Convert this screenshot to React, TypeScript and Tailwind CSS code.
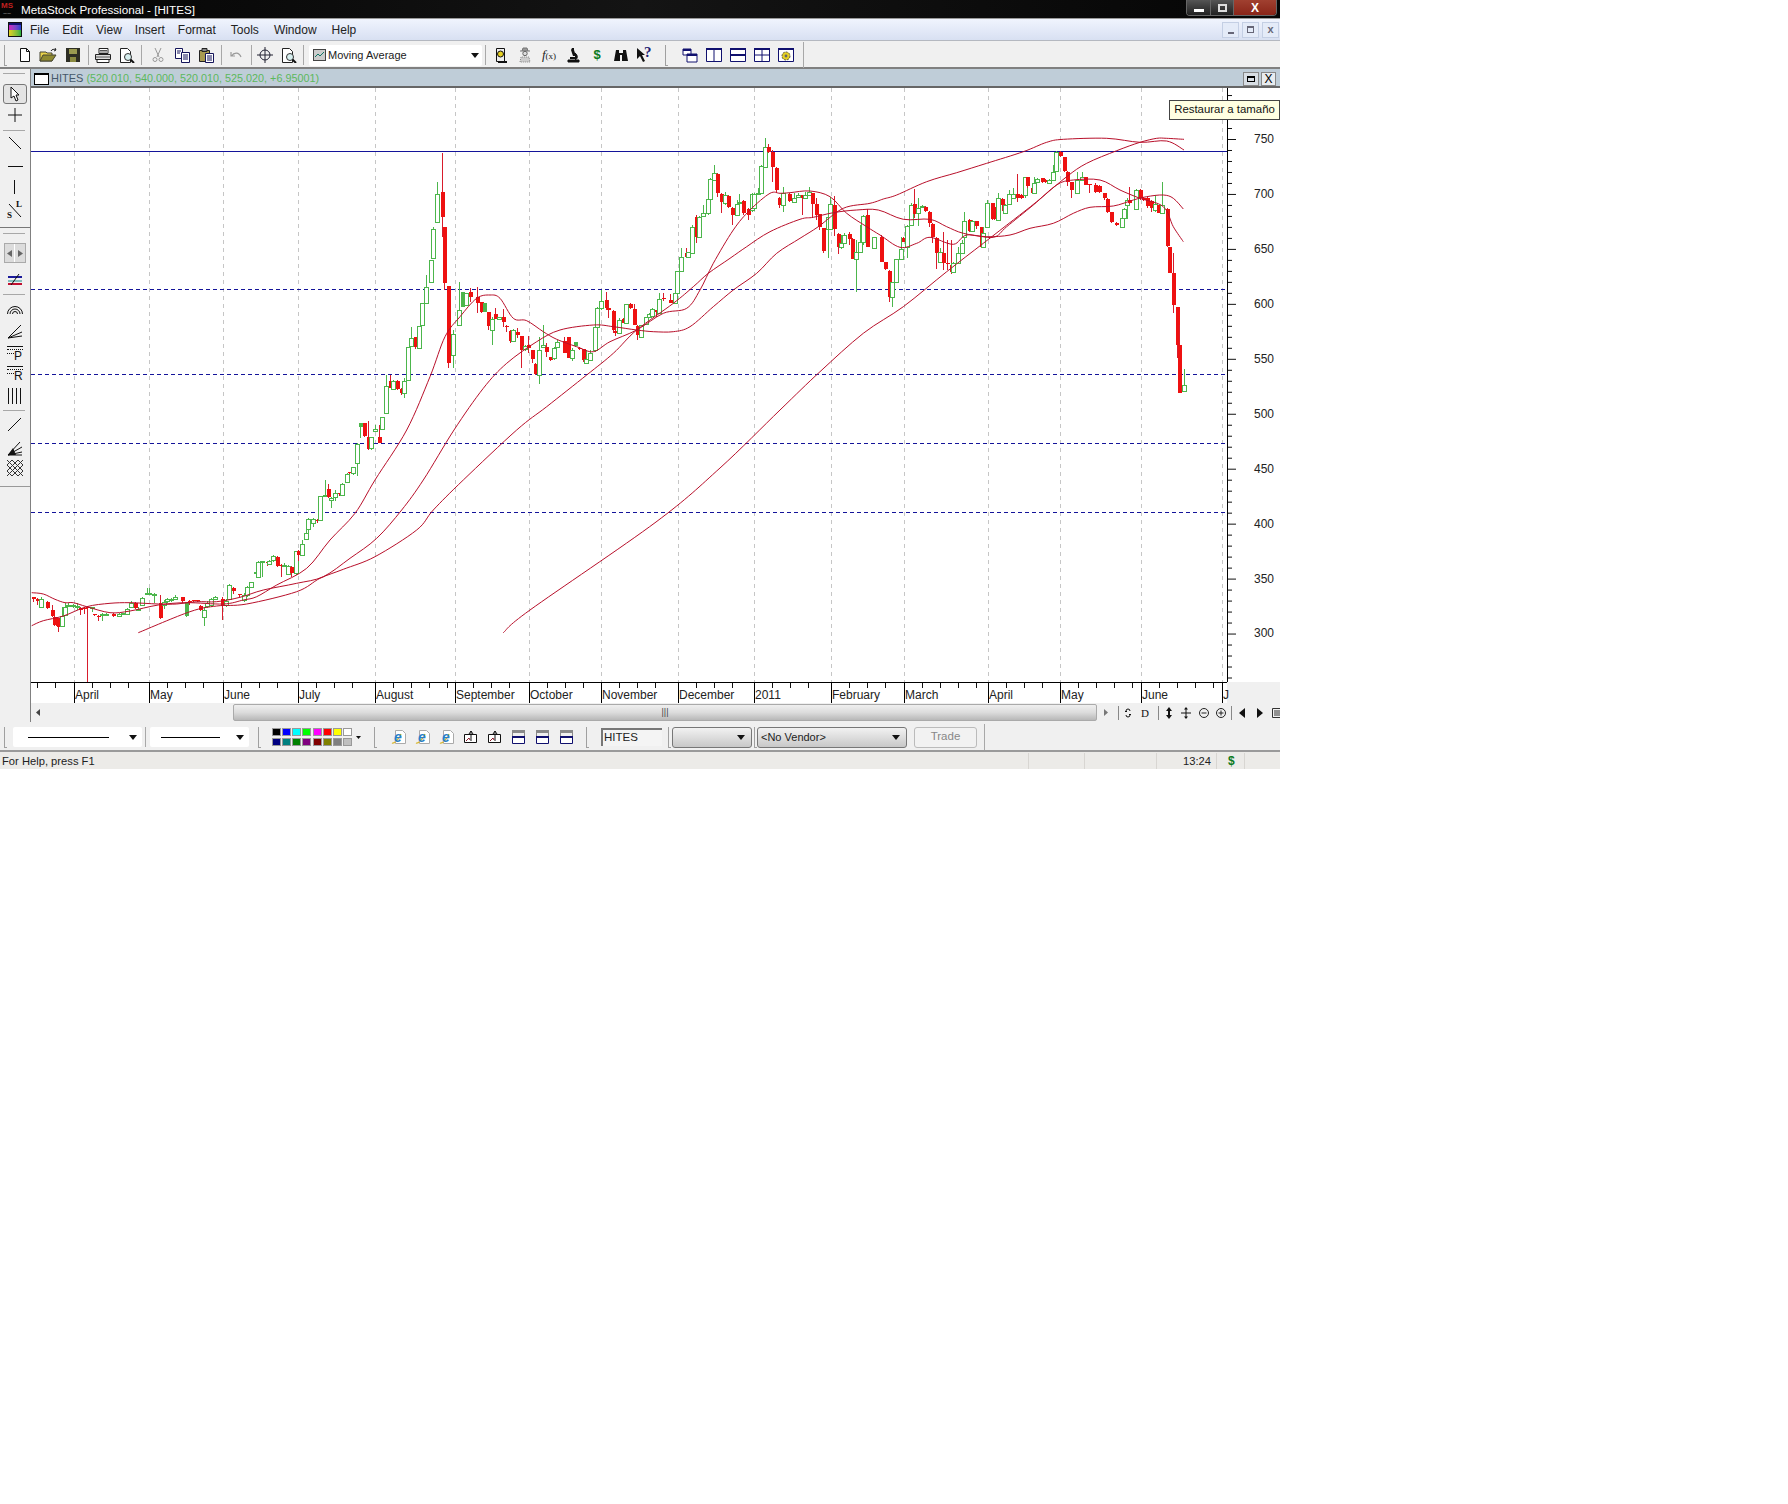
import React from 'react';

type Pt = [number, number];

const parseCandles = (ox: number, oy: number, s: string) =>
  s.split(',').map((row) => {
    const r = row.trim();
    const [x, h, l, t, b] = r.slice(1).split(' ').map(Number);
    return { c: r[0], x: Math.round(ox + x / 3), h: oy + h / 3, l: oy + l / 3, t: Math.round(oy + t / 3), b: Math.round(oy + b / 3) };
  });

const shift = (ox: number, oy: number, pts: Pt[]): Pt[] => pts.map(([x, y]) => [ox + x / 3, oy + y / 3]);

// catmull-rom through the points read off the chart
const smooth = (p: Pt[]) => {
  let d = `M${p[0][0].toFixed(1)} ${p[0][1].toFixed(1)}`;
  for (let i = 0; i < p.length - 1; i++) {
    const a = p[i - 1] || p[i];
    const b = p[i];
    const c = p[i + 1];
    const e = p[i + 2] || c;
    d += `C${(b[0] + (c[0] - a[0]) / 6).toFixed(1)} ${(b[1] + (c[1] - a[1]) / 6).toFixed(1)} ${(c[0] - (e[0] - b[0]) / 6).toFixed(1)} ${(c[1] - (e[1] - b[1]) / 6).toFixed(1)} ${c[0].toFixed(1)} ${c[1].toFixed(1)}`;
  }
  return d;
};

const candles = [
  ...parseCandles(30, 480, 'r10 350 365 352 358,r20 355 375 358 362,g32 352 382 358 380,r52 362 388 365 385,r65 375 410 390 408,r72 408 438 410 435,r80 410 440 415 438,r85 415 455 418 440,g97 380 438 408 437,g105 370 408 382 406,g115 368 382 374 378,g128 372 385 376 378,g140 368 390 378 380,r150 380 405 384 390,r163 382 402 385 387,r172 378 605 380 383,g187 380 396 381 383,r192 402 408 403 406,r205 405 422 407 409,g217 398 422 402 404,g228 400 404 401 403,r250 398 410 402 409,g268 398 410 402 408,g280 398 405 400 402,g290 385 405 386 402,g303 362 382 370 380,r316 365 388 368 385,g325 382 392 386 390,g337 350 378 355 376,g350 325 345 340 342,g358 325 342 340 342,g372 340 370 342 344,r390 345 418 370 415,g402 360 388 365 375,g410 355 370 358 362,g422 355 365 358 360,g435 345 360 350 358,r455 350 370 352 364,G468 365 410 367 408,r478 360 375 362 364,r490 360 365 361 363,r500 360 365 361 363,r510 375 392 377 390,g523 380 437 390 410,g532 362 385 368 378,g542 355 380 358 375,g555 348 360 352 356,r575 350 420 357 378,g587 358 380 362 376,g597 312 360 314 358,r608 322 342 325 332,r627 342 352 343 345,g642 340 365 345 360,g651 318 350 320 345,g663 305 325 307 322,g677 270 295 277 280,g683 242 295 245 292,g695 242 290 244 246,r710 245 258 246 248,g717 240 255 243 251,g729 225 245 227 241,r742 228 262 230 258,r752 252 290 254 256,g762 250 262 254 259,g775 255 285 258 282,r783 258 292 260 280,g797 212 285 214 280,r805 210 242 212 225,g816 180 228 193 226,g829 148 180 160 178,g834 115 175 118 148,g848 115 142 117 128,r860 118 128 119 120,g870 48 122 48 120,g884 0 50 45 48,r895 12 55 28 52,g904 50 85 54 60,g915 30 62 38 52,r927 38 48 40 42,g936 10 48 12 46'),
  ...parseCandles(335, 340, 'g35 400 425 402 425,r43 395 402 396 399,g54 380 405 382 400,g67 310 408 312 368,G75 250 295 250 260,r86 250 290 250 288,r100 243 330 290 328,g108 290 330 292 325,g120 255 275 267 274,r132 255 310 292 308'),
  ...parseCandles(380, 130, 'g5 860 900 860 898,g17 735 850 768 848,r30 735 775 752 774,g38 750 780 752 778,r50 750 780 752 778,r62 775 795 778 788,g72 745 805 752 790,g85 650 752 652 750,g93 590 650 625 648,r105 622 658 622 650,g118 588 655 588 654,g127 520 585 520 585,g138 435 520 470 518,g152 390 455 390 455,g158 290 385 298 385,g171 155 275 192 275,r185 70 320 186 262,r191 290 480 290 458,r204 468 715 468 698,g218 600 715 612 675,g238 455 585 540 585,G245 485 532 486 532,g258 488 528 488 526,r271 475 515 486 502,r290 470 548 502 520,r304 515 550 516 545,G312 520 545 520 545,r324 545 600 545 588,g337 560 645 568 600,r346 535 568 553 566,g357 560 570 562 568,r370 538 590 562 576,r378 585 605 587 590,r390 600 640 602 632,g399 598 635 600 632,r411 595 625 606 614,r424 618 715 618 660,g435 645 662 647 658,r445 618 670 645 655,r457 660 700 660 686,r465 700 735 702 732,g477 620 763 660 735,g490 585 650 645 650,r498 640 680 652 665,r510 680 692 682 691,g523 650 690 655 685,g530 630 655 635 652,r552 622 670 634 668,r564 622 685 622 684,g577 655 692 660 685,G585 635 650 635 648,r597 652 660 654 658,r610 656 695 658 690,g618 660 700 686 700,g630 660 690 668 690,g645 590 665 592 660,g652 530 595 535 590,g663 480 540 512 535,r677 487 540 510 535,r685 510 565 535 540,r698 540 610 542 600,r706 600 618 602 608,g716 565 612 570 610,r730 565 580 568 578,g738 522 580 522 580,r750 520 538 522 535,r763 522 585 538 585,r772 585 630 588 615,g782 585 620 586 620,g797 560 585 562 582,g806 550 562 552 560,g816 535 560 538 558,r828 540 560 540 545,g838 490 550 508 548,r850 490 512 505 508,r870 492 520 510 518,g884 480 520 490 518,g890 422 490 424 490,g903 355 425 382 424,r917 355 382 368 382,g923 365 385 367 382,g936 285 368 290 368,r948 255 340 260 322,g956 258 322 260 322,g968 225 258 250 258,g983 200 255 208 250,g990 145 208 148 208,g1003 105 150 130 150,r1011 130 200 132 190,r1023 190 250 192 215,g1035 185 225 195 220,r1044 195 235 197 232,r1056 232 285 234 254,g1070 210 258 222 256,g1078 192 222 215 218,r1089 210 255 212 248,r1103 235 270 238 255,g1115 190 245 193 240,g1122 190 235 193 235,g1135 175 195 190 193,g1143 105 190 108 190,g1156 25 110 52 110,r1165 42 70 52 65,r1176 60 155 65 112,r1189 112 190 115 180,r1196 200 235 203 225'),
  ...parseCandles(780, 130, 'g10 170 245 190 225,r28 190 215 192 213,g42 190 215 205 215,g55 190 205 195 200,r65 195 255 196 203,g75 185 207 195 205,g88 172 197 187 195,r96 190 265 190 222,r108 205 270 222 255,r117 252 300 253 292,r130 295 368 295 362,g143 258 385 260 298,g150 200 300 222 298,r162 198 318 225 298,r175 310 372 312 352,g183 315 358 340 352,g193 310 340 315 338,r207 305 345 312 328,r216 325 388 328 386,g228 330 485 365 388,g240 285 368 335 365,g248 255 345 258 335,r262 238 352 255 352,g282 320 355 322 355,r302 315 395 320 395,r315 395 420 397 418,r328 420 515 422 500,g335 455 532 455 500,g348 388 455 388 455,g362 320 388 358 388,r370 320 335 325 335,g381 285 385 288 352,g393 220 288 225 285,r403 178 265 222 252,g415 205 288 235 250,g425 225 235 228 232,r435 228 245 230 243,r448 243 290 245 280,r456 280 340 282 322,r468 322 418 325 368,g481 355 400 365 395,r489 305 420 368 398,r501 330 420 400 403,r513 330 432 405 425,g520 395 425 400 425,g533 350 400 368 398,g545 330 370 340 368,g552 245 338 272 320,r566 268 305 270 302,g577 270 305 272 302,r588 272 298 273 288,r604 290 355 290 350,g610 290 355 310 352,g621 210 290 218 290,r635 218 270 218 268,r642 230 270 232 268,g654 190 272 205 270,r665 205 242 208 225,g674 222 248 224 248,g687 180 222 192 222,g700 175 205 192 205,r710 132 215 192 205,r722 192 208 194 205,g735 142 205 142 195,r742 142 175 142 168,r755 172 188 174 188,g762 140 190 158 190,g772 145 158 146 156,r787 143 160 145 155,r795 148 160 150 155,g806 148 162 150 160,g820 105 150 125 150,g828 62 125 65 122,r840 62 80 65 78,r852 80 125 82 122,r860 122 168 125 155,r873 155 205 157 180,g892 125 190 150 188,g907 125 150 142 150,r914 140 165 142 165,r926 162 188 163 165,r945 160 188 165 185,r958 165 190 168 186,r972 188 210 190 205,r982 205 250 207 245,r993 245 280 247 275,r1008 275 288 278 286,g1025 262 292 265 290,g1033 235 270 238 265,g1040 205 268 210 225,r1048 172 222 210 218,g1067 178 240 180 238,r1080 178 210 180 205,r1090 200 212 203 210,r1101 202 235 204 228,r1113 210 245 212 235,g1125 195 245 222 240,r1134 225 250 225 248,g1146 155 250 225 250,r1160 235 350 238 348,r1166 350 430 350 428,r1180 370 550 430 525,r1192 530 685 530 645,r1198 585 790 645 788,g1213 718 785 765 782'),
];

const movingAverages: Pt[][] = [
  [
    ...shift(30, 480, [[5, 338], [40, 342], [75, 358], [105, 368], [130, 368], [170, 380], [240, 398], [300, 393], [385, 375], [470, 368], [580, 372], [640, 360], [680, 350], [740, 315], [830, 265], [900, 180], [975, 100], [1035, 0]]),
    ...shift(380, 130, [[80, 900], [150, 740], [195, 620], [240, 560], [290, 505], [330, 495], [360, 505], [400, 565], [440, 572], [490, 605], [530, 628], [590, 650], [640, 665], [690, 635], [770, 600], [850, 550], [920, 535], [960, 480], [1000, 400], [1060, 300], [1110, 240], [1170, 190]]),
    ...shift(780, 130, [[0, 190], [30, 188], [90, 183], [150, 200], [200, 250], [260, 290], [300, 315], [360, 352], [410, 340], [450, 322], [520, 343], [560, 315], [640, 322], [680, 290], [760, 225], [830, 165], [880, 150], [960, 150], [1020, 180], [1080, 205], [1150, 230], [1180, 290], [1210, 335]]),
  ],
  [
    ...shift(30, 480, [[5, 437], [40, 422], [100, 408], [170, 380], [240, 370], [300, 368], [385, 372], [440, 372], [500, 365], [560, 365], [630, 352], [700, 330], [800, 310], [880, 290], [960, 235], [1040, 175], [1115, 90], [1180, 0]]),
    ...shift(380, 130, [[222, 900], [310, 775], [380, 700], [470, 635], [540, 600], [640, 585], [700, 590], [770, 600], [820, 605], [880, 605], [930, 590], [1000, 530], [1060, 480], [1130, 430], [1190, 370]]),
    ...shift(780, 130, [[60, 325], [115, 290], [190, 235], [270, 220], [310, 207], [350, 195], [440, 155], [530, 128], [620, 100], [730, 65], [800, 37], [850, 28], [980, 25], [1080, 37], [1160, 33], [1212, 60]]),
  ],
  [
    ...shift(30, 480, [[325, 458], [480, 395], [560, 378], [650, 372], [800, 335], [870, 295], [940, 268], [1035, 230], [1160, 150], [1210, 90], [1300, 0]]),
    ...shift(380, 130, [[410, 900], [500, 830], [620, 735], [700, 670], [770, 600], [880, 520], [940, 470], [985, 430], [1050, 385], [1100, 350], [1170, 305]]),
    ...shift(780, 130, [[60, 268], [100, 262], [160, 248], [230, 240], [295, 240], [370, 268], [450, 268], [500, 290], [550, 310], [620, 320], [690, 315], [750, 295], [820, 280], [880, 250], [930, 232], [1000, 228], [1060, 210], [1100, 200], [1150, 195], [1180, 205], [1210, 237]]),
  ],
  [
    ...shift(30, 480, [[1420, 458], [1500, 390]]),
    [656, 522], [720, 468],
    ...shift(780, 130, [[0, 840], [120, 725], [250, 610], [370, 530], [500, 425], [610, 340], [700, 270], [770, 215], [860, 140], [920, 100], [1010, 62], [1080, 37], [1130, 25], [1160, 25], [1212, 28]]),
  ],
];

const gridX = [74, 149, 223, 298, 375, 455, 529, 601, 678, 754, 831, 904, 988, 1060, 1141, 1222];
const dashedY = [289, 374, 443, 512];
const prices = [750, 700, 650, 600, 550, 500, 450, 400, 350, 300];
const priceTicks = Array.from({ length: 54 }, (_, i) => i - 4);

const minorDates: number[] = [];
[31, ...gridX].forEach((x, i, all) => {
  const next = all[i + 1] ?? 1227;
  for (let t = i === 0 ? 37 : x + 18; t < next - 6; t += 18) minorDates.push(t);
});

const Chart = () => (
  <svg width="1196" height="594" viewBox="31 88 1196 594" className="block">
    {gridX.map((x) => (
      <line key={x} x1={x + 0.5} x2={x + 0.5} y1="88" y2="682" stroke="#c6c6c6" strokeDasharray="4 4" />
    ))}
    <line x1="31" x2="1227" y1="151.5" y2="151.5" stroke="#14149a" />
    {dashedY.map((y) => (
      <line key={y} x1="31" x2="1227" y1={y + 0.5} y2={y + 0.5} stroke="#14149a" strokeDasharray="4 3" />
    ))}
    <g shapeRendering="crispEdges">
      {candles.map((k, i) => {
        const color = k.c === 'r' ? '#ee1111' : '#4cb64c';
        return (
          <g key={i}>
            <line x1={k.x + 0.5} x2={k.x + 0.5} y1={k.h} y2={k.l} stroke={k.c === 'r' ? '#d81c2c' : color} />
            {k.c === 'g' ? (
              <rect x={k.x - 1.5} y={k.t + 0.5} width="4" height={Math.max(k.b - k.t, 1)} fill="#fff" stroke={color} />
            ) : (
              <rect x={k.x - 1} y={k.t} width="4" height={Math.max(k.b - k.t, 1)} fill={color} />
            )}
          </g>
        );
      })}
    </g>
    {movingAverages.map((p, i) => (
      <path key={i} d={smooth(p)} fill="none" stroke="#b80f2a" strokeWidth="1" />
    ))}
  </svg>
);

const Ico = ({ children, w = 16, h = 16 }: { children: React.ReactNode; w?: number; h?: number }) => (
  <svg width={w} height={h} viewBox={`0 0 ${w} ${h}`} className="block shrink-0">
    {children}
  </svg>
);

const Btn = ({ children }: { children: React.ReactNode }) => (
  <div className="w-[24px] h-full flex items-center justify-center shrink-0">{children}</div>
);

const Sep = ({ className = '' }: { className?: string }) => (
  <div className={`w-px h-[20px] bg-[#a8a8a8] shrink-0 ${className}`} />
);

const Handle = ({ className = '' }: { className?: string }) => (
  <div className={`w-[3px] h-[21px] border-l border-b border-[#a0a0a0] shrink-0 ${className}`} />
);

const DownArrow = () => (
  <Ico w={8} h={5}>
    <path d="M0 0h8L4 5z" fill="#111" />
  </Ico>
);

const DocIcon = () => (
  <Ico>
    <path d="M3.5 1.5h6l3 3v10h-9z" fill="#fff" stroke="#111" />
    <path d="M9.5 1.5v3h3" fill="none" stroke="#111" />
  </Ico>
);
const OpenIcon = () => (
  <Ico w={20}>
    <path d="M1 5h6l1 1h5v8H1z" fill="#e8d24a" stroke="#443" />
    <path d="M1 14l3-6h13l-4 6z" fill="#8f8a30" stroke="#443" />
    <path d="M12 4c1-2 3-2 5-1l-1-2m1 2l-2 1" fill="none" stroke="#222" />
  </Ico>
);
const SaveIcon = () => (
  <Ico>
    <path d="M1 1h14v14H1z" fill="#2e2e24" />
    <path d="M4 2h8v5H4z" fill="#9a9a50" />
    <path d="M5 10h6v5H5z" fill="#8a8a40" />
  </Ico>
);
const PrintIcon = () => (
  <Ico w={18}>
    <path d="M5 1.5h9v5H5z" fill="#fff" stroke="#222" />
    <path d="M1.5 7.5h15v5h-15z" fill="#ddd" stroke="#222" />
    <path d="M3 12.5h12v3H3z" fill="#fff" stroke="#222" />
    <path d="M6 3.5h7M6 5h7M2 10h14" stroke="#555" />
  </Ico>
);
const PreviewIcon = () => (
  <Ico w={18}>
    <path d="M2.5 1.5h7l3 3v11h-10z" fill="#fff" stroke="#222" />
    <circle cx="10" cy="10" r="3.5" fill="#d8f0f0" stroke="#333" />
    <path d="M12.5 12.5L16 16" stroke="#111" strokeWidth="2" />
  </Ico>
);
const CutIcon = () => (
  <Ico>
    <path d="M5 1l4 9M11 1L7 10" stroke="#999" fill="none" />
    <circle cx="5" cy="12.5" r="2" fill="none" stroke="#999" />
    <circle cx="11" cy="12.5" r="2" fill="none" stroke="#999" />
  </Ico>
);
const CopyIcon = () => (
  <Ico w={17}>
    <path d="M1.5 1.5h7v10h-7z" fill="#fff" stroke="#14145a" />
    <path d="M7.5 5.5h8v10h-8z" fill="#fff" stroke="#14145a" />
    <path d="M3 4h4M3 6h3M9 8h5M9 10h5M9 12h5" stroke="#14145a" />
  </Ico>
);
const PasteIcon = () => (
  <Ico w={17}>
    <path d="M1.5 3.5h10v11h-10z" fill="#a89a50" stroke="#222" />
    <path d="M4 1.5h5v3H4z" fill="#888" stroke="#222" />
    <path d="M7.5 6.5h8v9h-8z" fill="#fff" stroke="#14145a" />
    <path d="M9 9h5M9 11h5M9 13h5" stroke="#14145a" />
  </Ico>
);
const UndoIcon = () => (
  <Ico>
    <path d="M3 5v4h4M3.5 9C6 5 11 5 13 10" fill="none" stroke="#999" strokeWidth="1.2" />
  </Ico>
);
const CrossIcon = () => (
  <Ico>
    <circle cx="8" cy="8" r="5" fill="none" stroke="#223" />
    <path d="M8 0v16M0 8h16" stroke="#223" />
  </Ico>
);
const BadgeIcon = () => (
  <Ico>
    <path d="M3.5 1.5h8v13h-8z" fill="#eee" stroke="#111" />
    <circle cx="7.5" cy="7" r="3" fill="#e6d020" stroke="#111" />
    <path d="M5 14h9v2H5z" fill="#111" />
  </Ico>
);
const ManIcon = () => (
  <Ico>
    <path d="M3 4h10M5 4l1-3h4l1 3" stroke="#777" fill="#999" />
    <circle cx="8" cy="6.5" r="2.2" fill="#ddd" stroke="#666" />
    <path d="M3 15l1-5h8l1 5z" fill="#ccc" stroke="#888" strokeDasharray="1 1" />
  </Ico>
);
const MicroscopeIcon = () => (
  <Ico>
    <path d="M7 1h2v2l2 6H8L6 3z" fill="#111" />
    <path d="M10 6c3 2 3 6 0 7M3 15h11v-2H3z" fill="#111" stroke="#111" />
    <path d="M5 11h6" stroke="#111" strokeWidth="2" />
  </Ico>
);
const BinocularsIcon = () => (
  <Ico>
    <path d="M3 3h3v3h4V3h3l2 11h-6V8H7v6H1z" fill="#111" />
  </Ico>
);
const WhatsThisIcon = () => (
  <div className="relative w-[18px] h-[16px]">
    <svg width="18" height="16" viewBox="0 0 18 16" className="block">
      <path d="M1 1l8 7H6l3 6-2 1-3-6-3 3z" fill="#111" />
    </svg>
    <span className="absolute left-[8px] top-[-3px] text-[15px] leading-[16px] font-bold text-[#1c1c70] font-['Liberation_Serif',serif]">?</span>
  </div>
);

const NAVY = '#10106e';
const CascadeIcon = () => (
  <Ico>
    <path d="M1 2h8v6H1z" fill="#fff" stroke={NAVY} />
    <path d="M1 2h8v2H1z" fill={NAVY} />
    <path d="M5 7h10v8H5z" fill="#fff" stroke={NAVY} />
    <path d="M5 7h10v2H5z" fill={NAVY} />
  </Ico>
);
const TileV = () => (
  <Ico>
    <path d="M.5 1.5h15v13H.5zM8 1.5v13" fill="#fff" stroke={NAVY} />
    <path d="M0 1h16v2H0z" fill={NAVY} />
  </Ico>
);
const TileH = () => (
  <Ico>
    <path d="M.5 1.5h15v13H.5z" fill="#fff" stroke={NAVY} />
    <path d="M0 1h16v2H0zM0 7h16v2H0z" fill={NAVY} />
  </Ico>
);
const TileQ = () => (
  <Ico>
    <path d="M.5 1.5h15v13H.5zM8 1.5v13M.5 8h15" fill="#fff" stroke={NAVY} />
    <path d="M0 1h16v2H0z" fill={NAVY} />
  </Ico>
);
const TileGear = () => (
  <Ico>
    <path d="M.5 1.5h15v13H.5z" fill="#fff" stroke={NAVY} />
    <path d="M0 1h16v2H0z" fill={NAVY} />
    <circle cx="8" cy="9" r="4" fill="#e6d020" stroke="#555" strokeDasharray="2 1" />
    <circle cx="8" cy="9" r="1.4" fill="#666" />
  </Ico>
);

const IEIcon = () => (
  <div className="relative w-[16px] h-[16px] shrink-0">
    <Ico>
      <path d="M4.5 1.5h7l3 3v10h-10z" fill="#fff" stroke="#aaa" />
      <path d="M1 14c2 1 7-4 9-9" fill="none" stroke="#d8b830" strokeWidth="1.3" />
    </Ico>
    <span className="absolute left-[3px] top-[1px] text-[14px] leading-[14px] italic font-bold text-[#2a7fc8]">e</span>
  </div>
);
const StackDocIcon = () => (
  <Ico>
    <path d="M1.5 5.5h12v8h-12z" fill="#fff" stroke="#111" />
    <path d="M3 12l3-3 1 2" fill="none" stroke="#8a1a2a" />
    <path d="M8 12V2M8 2L6 5M8 2l2 3" fill="none" stroke="#111" />
  </Ico>
);
const PaneIcon = () => (
  <Ico>
    <path d="M1 1h13v3H1z" fill="#8a8a8a" />
    <path d="M1.5 4v3M13.5 4v3" stroke="#8a8a8a" />
    <path d="M1.5 8.5h12v6h-12z" fill="#fff" stroke={NAVY} />
    <path d="M1 7h13v2H1z" fill={NAVY} />
  </Ico>
);

const Slot = ({ className, children }: { className: string; children: React.ReactNode }) => (
  <div className={`w-[30px] flex items-center justify-center shrink-0 ${className}`}>{children}</div>
);
const SideSep = ({ className = '' }: { className?: string }) => (
  <div className={`w-[22px] h-px ml-[3px] bg-[#a8a8a8] shrink-0 ${className}`} />
);

const Sidebar = () => (
  <aside className="w-[31px] h-[653px] bg-[#f0f0f0] border-r border-[#808080] flex flex-col shrink-0 overflow-hidden">
    <SideSep className="mt-[4px]" />
    <div className="mt-[10px] ml-[3px] w-[24px] h-[20px] rounded-[3px] border border-[#777] bg-[#e4e4e4] flex items-center justify-center shrink-0">
      <Ico w={12} h={16}>
        <path d="M2 1l0 11 3-2 2 5 2-1-2-5h3z" fill="#fff" stroke="#111" />
      </Ico>
    </div>
    <Slot className="h-[22px]">
      <Ico><path d="M8 1v14M1 8h14" stroke="#111" /></Ico>
    </Slot>
    <SideSep className="mt-[4px]" />
    <Slot className="h-[24px]">
      <Ico><path d="M2 2l12 12" stroke="#111" /></Ico>
    </Slot>
    <Slot className="h-[21px]">
      <Ico><path d="M1 8.5h15" stroke="#111" /></Ico>
    </Slot>
    <Slot className="h-[22px]">
      <Ico><path d="M7.5 1v14" stroke="#111" /></Ico>
    </Slot>
    <Slot className="h-[24px]">
      <div className="relative w-[16px] h-[16px]">
        <Ico><path d="M2 2l12 13" stroke="#111" /></Ico>
        <span className="absolute left-[9px] top-[-3px] text-[9px] font-bold leading-[10px] font-['Liberation_Serif',serif]">L</span>
        <span className="absolute left-0 top-[8px] text-[9px] font-bold leading-[10px] font-['Liberation_Serif',serif]">S</span>
      </div>
    </Slot>
    <div className="mt-[5px] w-[30px] h-px bg-[#777] shrink-0" />
    <SideSep className="mt-[5px]" />
    <div className="mt-[9px] ml-[4px] w-[22px] h-[20px] border border-[#aaa] flex shrink-0">
      <div className="w-1/2 h-full bg-[#dcdcdc] border-r border-white flex items-center justify-center">
        <Ico w={5} h={7}><path d="M5 0v7L0 3.5z" fill="#666" /></Ico>
      </div>
      <div className="w-1/2 h-full bg-[#dcdcdc] flex items-center justify-center">
        <Ico w={5} h={7}><path d="M0 0v7l5-3.5z" fill="#666" /></Ico>
      </div>
    </div>
    <Slot className="mt-[7px] h-[20px]">
      <Ico>
        <path d="M1 5h14" stroke="#1a1a9a" strokeWidth="2" />
        <path d="M1 9h14" stroke="#1a8a8a" />
        <path d="M1 12h14" stroke="#c01030" strokeWidth="2" />
        <path d="M4 13l8-11" stroke="#111" />
      </Ico>
    </Slot>
    <SideSep className="mt-[4px]" />
    <Slot className="mt-[4px] h-[20px]">
      <Ico>
        <path d="M.5 13a7.5 7.5 0 0 1 15 0M3 13a5 5 0 0 1 10 0M5.5 13a2.5 2.5 0 0 1 5 0" fill="none" stroke="#111" />
      </Ico>
    </Slot>
    <Slot className="h-[24px]">
      <Ico>
        <path d="M1 15L14 2M1 15l14-6M1 15l14-2" fill="none" stroke="#111" />
      </Ico>
    </Slot>
    <Slot className="h-[22px]">
      <div className="relative w-[16px] h-[16px] border-t border-[#111]">
        <div className="border-t border-dotted border-[#111] mt-[2px]" />
        <div className="border-t border-dotted border-[#111] mt-[3px] w-[7px]" />
        <span className="absolute left-[7px] top-[3px] text-[12px] leading-[12px] font-['Liberation_Sans',sans-serif]">P</span>
      </div>
    </Slot>
    <Slot className="h-[18px]">
      <div className="relative w-[16px] h-[16px] border-t border-[#111]">
        <div className="border-t border-dotted border-[#111] mt-[2px]" />
        <div className="border-t border-dotted border-[#111] mt-[3px] w-[7px]" />
        <span className="absolute left-[7px] top-[3px] text-[12px] leading-[12px] font-['Liberation_Sans',sans-serif]">R</span>
      </div>
    </Slot>
    <Slot className="h-[26px]">
      <Ico><path d="M1.5 0v16M5.5 0v16M9.5 0v16M13.5 0v16" stroke="#111" /></Ico>
    </Slot>
    <SideSep className="mt-px" />
    <Slot className="h-[26px]">
      <Ico><path d="M1 15L14 2" stroke="#111" /></Ico>
    </Slot>
    <Slot className="h-[21px]">
      <Ico>
        <path d="M1 15L13 2M1 15l14-8M1 15l14-3M1 15h14" fill="none" stroke="#111" />
        <path d="M1 15l5-7 3 7z" fill="#111" />
      </Ico>
    </Slot>
    <Slot className="h-[20px]">
      <Ico>
        <path d="M0 0l16 16M5 0l11 11M11 0l5 5M0 5l11 11M0 11l5 5M16 0L0 16M11 0L0 11M5 0L0 5M16 5L5 16M16 11l-5 5" fill="none" stroke="#333" />
      </Ico>
    </Slot>
    <div className="mt-[8px] w-[30px] h-px bg-[#999] shrink-0" />
  </aside>
);

const monthLabels: { label: string; w: string }[] = [
  { label: 'April', w: 'w-[75px]' },
  { label: 'May', w: 'w-[74px]' },
  { label: 'June', w: 'w-[75px]' },
  { label: 'July', w: 'w-[77px]' },
  { label: 'August', w: 'w-[80px]' },
  { label: 'September', w: 'w-[74px]' },
  { label: 'October', w: 'w-[72px]' },
  { label: 'November', w: 'w-[77px]' },
  { label: 'December', w: 'w-[76px]' },
  { label: '2011', w: 'w-[77px]' },
  { label: 'February', w: 'w-[73px]' },
  { label: 'March', w: 'w-[84px]' },
  { label: 'April', w: 'w-[72px]' },
  { label: 'May', w: 'w-[81px]' },
  { label: 'June', w: 'w-[81px]' },
  { label: 'J', w: 'w-[5px]' },
];

const DateAxis = () => (
  <div className="flex h-[21px] shrink-0">
    <div className="relative w-[1196px] h-full bg-white flex pl-[43px] border-t border-black shrink-0">
      <svg width="1196" height="6" viewBox="31 0 1196 6" className="absolute left-0 top-0">
        {minorDates.map((x) => (
          <line key={x} x1={x + 0.5} x2={x + 0.5} y1="0" y2="5" stroke="#111" />
        ))}
      </svg>
      {monthLabels.map((m, i) => (
        <div key={i} className={`${m.w} h-full border-l border-black pt-[5px] text-[12px] leading-[14px] text-[#222] shrink-0 whitespace-nowrap`}>
          {m.label}
        </div>
      ))}
    </div>
    <div className="flex-1 bg-[#f0f0f0]" />
  </div>
);

const ScrollRow = () => (
  <div className="h-[19px] bg-[#f0f0f0] flex items-center shrink-0">
    <div className="w-[202px] pl-[5px] shrink-0">
      <Ico w={4} h={7}><path d="M4 0v7L0 3.5z" fill="#444" /></Ico>
    </div>
    <div className="w-[864px] h-[17px] rounded-[2px] border border-[#aaa] bg-gradient-to-b from-[#efefef] via-[#dcdcdc] to-[#b8b8b8] flex items-center justify-center text-[9px] text-[#444] shrink-0">
      |||
    </div>
    <div className="w-[8px] ml-[7px] shrink-0">
      <Ico w={4} h={7}><path d="M0 0v7l4-3.5z" fill="#777" /></Ico>
    </div>
    <div className="w-px h-[14px] bg-[#888] ml-[6px] shrink-0" />
    <div className="ml-[5px] w-[8px] shrink-0">
      <Ico w={8} h={12}><path d="M2 4a2 2 0 0 1 4 0M6 8a2 2 0 0 1-4 0M1 4l1 1 1-1M5 8l1-1 1 1" fill="none" stroke="#111" /></Ico>
    </div>
    <div className="ml-[9px] w-[8px] text-[11px] leading-[12px] font-['Liberation_Serif',serif] text-[#111] shrink-0">D</div>
    <div className="w-px h-[14px] bg-[#888] ml-[9px] shrink-0" />
    <div className="ml-[6px] shrink-0">
      <Ico w={8} h={12}><path d="M4 0l3 4H1zM4 12l3-4H1z" fill="#111" /><path d="M3 4h2v4H3z" fill="#111" /></Ico>
    </div>
    <div className="ml-[7px] shrink-0">
      <Ico w={12} h={12}><path d="M6 1v10M1 6h10" stroke="#111" /><path d="M6 0l2 2.5H4zM6 12l2-2.5H4z" fill="#111" /></Ico>
    </div>
    <div className="ml-[6px] shrink-0">
      <Ico w={12} h={12}><circle cx="6" cy="6" r="4.5" fill="none" stroke="#222" /><path d="M3.5 6h5" stroke="#222" /></Ico>
    </div>
    <div className="ml-[5px] shrink-0">
      <Ico w={12} h={12}><circle cx="6" cy="6" r="4.5" fill="none" stroke="#222" /><path d="M3.5 6h5M6 3.5v5" stroke="#222" /></Ico>
    </div>
    <div className="w-px h-[14px] bg-[#888] ml-[4px] shrink-0" />
    <div className="ml-[7px] shrink-0">
      <Ico w={6} h={10}><path d="M6 0v10L0 5z" fill="#111" /></Ico>
    </div>
    <div className="ml-[12px] shrink-0">
      <Ico w={6} h={10}><path d="M0 0v10l6-5z" fill="#111" /></Ico>
    </div>
    <div className="ml-[9px] w-[8px] h-[10px] overflow-hidden shrink-0">
      <Ico w={8} h={10}><path d="M.5.5h9v9h-9zM2 3h6M2 5h6M2 7h6" fill="none" stroke="#333" /></Ico>
    </div>
  </div>
);

const swatches = ['#000000', '#0000ff', '#00ffff', '#00ff00', '#ff00ff', '#ff0000', '#ffff00', '#ffffff', '#000080', '#008080', '#008000', '#800080', '#800000', '#808000', '#808080', '#c0c0c0'];

const BottomToolbar = () => (
  <div className="h-[28px] pt-[2px] bg-[#f0f0f0] flex items-center shrink-0 text-[#222]">
    <Handle className="ml-[4px]" />
    <div className="ml-[6px] w-[129px] h-[20px] rounded-[2px] bg-white flex items-center pl-[15px] shrink-0">
      <div className="w-[81px] h-px bg-black" />
      <div className="ml-[20px]"><DownArrow /></div>
    </div>
    <Sep className="ml-[3px]" />
    <div className="ml-[4px] w-[99px] h-[20px] rounded-[2px] bg-white flex items-center pl-[11px] shrink-0">
      <div className="w-[59px] h-px bg-black" />
      <div className="ml-[16px]"><DownArrow /></div>
    </div>
    <Handle className="ml-[9px]" />
    <div className="ml-[11px] w-[81px] grid grid-cols-8 gap-y-[2px] shrink-0">
      {swatches.map((c, i) => (
        <div key={i} className="w-[9px] h-[8px] border border-[#999]" style={{ backgroundColor: c }} />
      ))}
    </div>
    <div className="ml-[3px] w-[5px]">
      <Ico w={5} h={3}><path d="M0 0h5L2.5 3z" fill="#111" /></Ico>
    </div>
    <Handle className="ml-[13px]" />
    <div className="ml-[10px] flex h-full">
      <Btn><IEIcon /></Btn>
      <Btn><IEIcon /></Btn>
      <Btn><IEIcon /></Btn>
      <Btn><StackDocIcon /></Btn>
      <Btn><StackDocIcon /></Btn>
      <Btn><PaneIcon /></Btn>
      <Btn><PaneIcon /></Btn>
      <Btn><PaneIcon /></Btn>
    </div>
    <Handle className="ml-[7px]" />
    <div className="ml-[12px] w-[61px] h-[18px] border-t-2 border-l-2 border-[#777] bg-[#f4f4f4] text-[11.5px] leading-[15px] pl-px shrink-0">HITES</div>
    <Handle className="ml-[6px]" />
    <div className="ml-[1px] w-[80px] h-[21px] rounded-[3px] border border-[#777] bg-gradient-to-b from-[#f2f2f2] to-[#c8c8c8] flex items-center justify-end pr-[6px] shrink-0">
      <DownArrow />
    </div>
    <Handle className="ml-[2px]" />
    <div className="w-[150px] h-[21px] rounded-[3px] border border-[#777] bg-gradient-to-b from-[#f2f2f2] to-[#c8c8c8] flex items-center justify-between pl-[3px] pr-[6px] text-[11px] shrink-0">
      <span>&lt;No Vendor&gt;</span>
      <DownArrow />
    </div>
    <div className="ml-[7px] w-[63px] h-[21px] rounded-[3px] border border-[#bbb] bg-[#f2f2f2] flex items-center justify-center text-[11.5px] text-[#888] shrink-0">Trade</div>
    <Sep className="ml-[7px] h-[26px]" />
  </div>
);

const StatusCell = ({ className, children }: { className: string; children?: React.ReactNode }) => (
  <div className={`h-full border-l border-[#d8d6d2] flex items-center shrink-0 ${className}`}>{children}</div>
);

const PriceLabel = ({ v }: { v: number }) => (
  <div className="h-[54.9px] flex items-center pl-[26px] text-[12px] text-[#222]">{v}</div>
);

export default function App() {
  return (
    <div className="w-[1280px] font-['Liberation_Sans',sans-serif] text-[#111]">
      {/* title bar */}
      <div className="h-[19px] pt-px bg-gradient-to-r from-[#050505] via-[#141414] to-[#060606] border-b border-[#9a9a9a] flex items-center relative">
        <div className="w-[20px] h-[16px] relative overflow-hidden">
          <span className="absolute left-[1px] top-[-1px] text-[8px] leading-[9px] font-bold text-[#c02020]">MS</span>
          <span className="absolute left-[3px] top-[8px] text-[7px] leading-[7px] text-[#888]">~~</span>
        </div>
        <span className="ml-px text-[11.7px] text-white whitespace-nowrap">MetaStock Professional - [HITES]</span>
        <div className="absolute left-[1186px] top-0 w-[91px] h-[16px] flex rounded-b-[4px] border border-t-0 border-[#666] overflow-hidden">
          <div className="w-[24px] h-full bg-gradient-to-b from-[#555] to-[#222] border-r border-[#666] flex items-end justify-center pb-[3px]">
            <div className="w-[10px] h-[3px] bg-white" />
          </div>
          <div className="w-[23px] h-full bg-gradient-to-b from-[#555] to-[#222] border-r border-[#666] flex items-center justify-center">
            <div className="w-[9px] h-[8px] border-2 border-[#ddd]" />
          </div>
          <div className="flex-1 bg-gradient-to-b from-[#a04030] to-[#8a2418] flex items-center justify-center text-white text-[12px] leading-[12px] font-bold">X</div>
        </div>
      </div>

      {/* menu bar */}
      <div className="h-[22px] bg-gradient-to-b from-[#f0f4fd] via-[#e4eaf8] to-[#d8e0f2] border-b border-[#b4b8c0] flex items-center">
        <div className="ml-[8px] w-[14px] h-[15px] border border-[#111] bg-white shrink-0">
          <div className="h-[2px] bg-[#10106e]" />
          <div className="h-[5px] bg-gradient-to-r from-[#d020c0] to-[#2040d0]" />
          <div className="h-[6px] bg-gradient-to-r from-[#e0d020] to-[#20b040]" />
        </div>
        <nav className="ml-[8px] flex gap-[13px] text-[12px] text-[#222]">
          <span>File</span>
          <span>Edit</span>
          <span>View</span>
          <span>Insert</span>
          <span>Format</span>
          <span className="ml-[2px]">Tools</span>
          <span className="ml-[2px]">Window</span>
          <span className="ml-[2px]">Help</span>
        </nav>
        <div className="ml-auto mr-px flex gap-[3px] text-[#666]">
          <div className="w-[17px] h-[16px] border border-[#c4cfe4] bg-[#e4ebf8] flex items-end justify-center pb-[3px]"><div className="w-[6px] h-[2px] bg-[#667]" /></div>
          <div className="w-[17px] h-[16px] border border-[#c4cfe4] bg-[#e4ebf8] flex items-center justify-center"><div className="w-[7px] h-[7px] border border-t-2 border-[#667]" /></div>
          <div className="w-[17px] h-[16px] border border-[#c4cfe4] bg-[#e4ebf8] flex items-center justify-center text-[11px] leading-[11px] font-bold text-[#667]">x</div>
        </div>
      </div>

      {/* main toolbar */}
      <div className="h-[28px] pt-[2px] bg-[#f0f0f0] border-b-2 border-[#808080] flex items-center">
        <Handle className="ml-[4px]" />
        <div className="ml-[6px] flex h-full">
          <Btn><DocIcon /></Btn>
          <Btn><OpenIcon /></Btn>
          <Btn><SaveIcon /></Btn>
        </div>
        <Sep className="ml-[3px]" />
        <div className="ml-[2px] flex h-full">
          <Btn><PrintIcon /></Btn>
          <Btn><PreviewIcon /></Btn>
        </div>
        <Sep className="ml-[2px]" />
        <div className="ml-[4px] flex h-full">
          <Btn><CutIcon /></Btn>
          <Btn><CopyIcon /></Btn>
          <Btn><PasteIcon /></Btn>
        </div>
        <Sep className="ml-[3px]" />
        <div className="ml-[2px] h-full"><Btn><UndoIcon /></Btn></div>
        <Sep className="ml-[3px]" />
        <div className="ml-[1px] flex h-full">
          <Btn><CrossIcon /></Btn>
          <Btn><PreviewIcon /></Btn>
        </div>
        <Sep className="ml-[2px]" />
        <div className="ml-[5px] w-[173px] h-[21px] rounded-[2px] bg-white flex items-center pl-[4px] pr-[3px] text-[11px] text-[#222] shrink-0">
          <div className="w-[13px] h-[12px] border border-[#444] bg-[#ccc] mr-[2px]">
            <svg width="11" height="10" viewBox="0 0 11 10"><path d="M1 7l3-3 2 2 4-4" fill="none" stroke="#176" /></svg>
          </div>
          <span>Moving Average</span>
          <div className="ml-auto"><DownArrow /></div>
        </div>
        <Sep className="ml-[3px]" />
        <div className="ml-[3px] flex h-full">
          <Btn><BadgeIcon /></Btn>
          <Btn><ManIcon /></Btn>
          <Btn><span className="font-['Liberation_Serif',serif] italic text-[13px] text-[#222] whitespace-nowrap">f<span className="text-[9px] not-italic">(x)</span></span></Btn>
          <Btn><MicroscopeIcon /></Btn>
          <Btn><span className="text-[13px] font-bold text-[#0c7a20]">$</span></Btn>
          <Btn><BinocularsIcon /></Btn>
          <Btn><WhatsThisIcon /></Btn>
        </div>
        <Handle className="ml-[8px]" />
        <div className="ml-[10px] flex h-full">
          <Btn><CascadeIcon /></Btn>
          <Btn><TileV /></Btn>
          <Btn><TileH /></Btn>
          <Btn><TileQ /></Btn>
          <Btn><TileGear /></Btn>
        </div>
        <Sep className="ml-[5px] h-[26px]" />
      </div>

      <div className="flex">
        <Sidebar />
        <div className="flex-1 flex flex-col min-w-0">
          {/* chart caption */}
          <div className="h-[19px] pt-[2px] bg-[#bfcdd8] border-b-2 border-[#666] flex items-center shrink-0">
            <div className="ml-[3px] w-[15px] h-[12px] border border-black border-t-2 bg-white" />
            <span className="ml-[2px] text-[11px] text-[#45586a]">HITES</span>
            <span className="ml-[3px] text-[10.8px] text-[#5cb85c]">(520.010, 540.000, 520.010, 525.020, +6.95001)</span>
            <div className="ml-auto mr-[4px] flex gap-[2px]">
              <div className="w-[16px] h-[14px] border border-[#888] bg-[#d8dee4] flex items-center justify-center">
                <div className="w-[8px] h-[6px] border border-t-2 border-black" />
              </div>
              <div className="w-[15px] h-[14px] border border-[#888] bg-[#e8ecef] flex items-center justify-center text-[12px] leading-[12px] text-black">X</div>
            </div>
          </div>

          <div className="relative flex h-[594px] bg-white shrink-0">
            <div className="w-[1196px] shrink-0">
              <Chart />
            </div>
            <div className="relative flex-1 border-l border-black pt-[24px]">
              <svg width="9" height="594" className="absolute left-0 top-0">
                {priceTicks.map((k) => (
                  <line key={k} x1="0" x2={k % 5 === 0 ? 8 : 4} y1={51.5 + k * 10.99} y2={51.5 + k * 10.99} stroke="#111" />
                ))}
              </svg>
              {prices.map((p) => (
                <PriceLabel key={p} v={p} />
              ))}
            </div>
            <div className="absolute right-0 top-[12px] w-[111px] h-[20px] bg-[#ffffe1] border border-[#444] flex items-center justify-center text-[11.4px] text-[#111] whitespace-nowrap">
              Restaurar a tamaño
            </div>
          </div>

          <DateAxis />
          <ScrollRow />
        </div>
      </div>

      <BottomToolbar />

      {/* status bar */}
      <div className="h-[19px] pt-px border-t-2 border-[#9a9a9a] bg-[#ecebe8] flex items-center text-[11.2px] text-[#222]">
        <span className="w-[1028px] pl-[2px] shrink-0">For Help, press F1</span>
        <StatusCell className="w-[56px]" />
        <StatusCell className="w-[72px]" />
        <StatusCell className="w-[60px] pl-[26px]">13:24</StatusCell>
        <StatusCell className="w-[28px] pl-[11px] text-[12px] font-bold text-[#0c7a20]">$</StatusCell>
        <StatusCell className="flex-1" />
      </div>
    </div>
  );
}
